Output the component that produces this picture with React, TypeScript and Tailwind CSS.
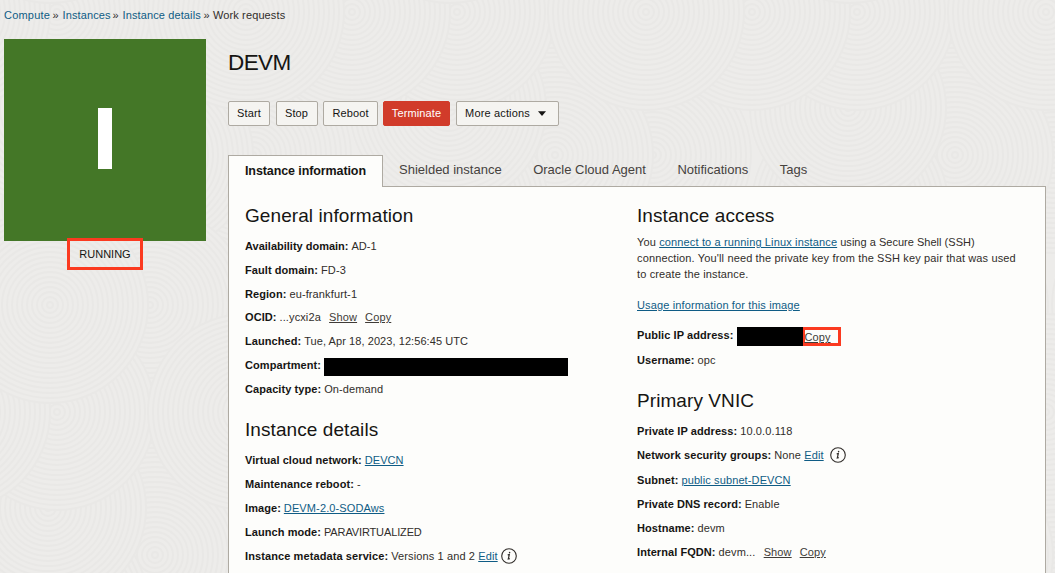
import type { ReactNode } from "react";

const TILE = 400;
const RINGS = [3, 8, 13, 18, 23, 28, 33, 38, 43, 48, 53, 58, 63, 68, 73, 78, 83, 88, 93, 98];
const SWIRLS: [number, number][] = [
  [350, 305], [150, 355], [253, 155], [155, 155], [50, 205], [150, 305], [48, 108], [57, 12], [352, 12], [246, 12], [50, 305],
];

function Swirls() {
  return (
    <svg className="absolute inset-0 h-full w-full" aria-hidden="true">
      <defs>
        <g id="swirl">
          <circle r="98" fill="#edecea" />
          {RINGS.map((r) => (
            <circle key={r} r={r} fill="none" stroke="#e9e8e6" strokeWidth="1.8" />
          ))}
        </g>
        <pattern id="sand" width={TILE} height={TILE} patternUnits="userSpaceOnUse">
          {SWIRLS.map(([x, y]) =>
            [-TILE, 0, TILE].map((dx) =>
              [-TILE, 0, TILE].map((dy) => (
                <use key={`${x}-${y}-${dx}-${dy}`} href="#swirl" x={x + dx} y={y + dy} />
              )),
            ),
          )}
        </pattern>
      </defs>
      <rect width="100%" height="100%" fill="url(#sand)" />
    </svg>
  );
}

function Link({ children, className = "" }: { children: ReactNode; className?: string }) {
  return (
    <a className={`text-[#0f5c85] underline decoration-1 underline-offset-1 ${className}`}>{children}</a>
  );
}

function Action({ children, className = "" }: { children: ReactNode; className?: string }) {
  return <a className={`text-[#403c38] underline decoration-1 underline-offset-1 ${className}`}>{children}</a>;
}

function Row({
  label,
  children,
  className = "h-6",
  labelClass = "tracking-[0.07px]",
}: {
  label: string;
  children?: ReactNode;
  className?: string;
  labelClass?: string;
}) {
  return (
    <div className={`flex items-center whitespace-pre ${className}`}>
      <b className={`text-[#161513] ${labelClass}`}>{label}</b>
      <span className="tracking-[-0.1px]"> </span>
      {children}
    </div>
  );
}

function Info({ className = "" }: { className?: string }) {
  return (
    <svg className={`size-4 ${className}`} viewBox="0 0 16 16" fill="none" stroke="#312d2a">
      <circle cx="8" cy="8" r="7.3" strokeWidth="1.1" />
      <path d="M6.7 6.9l1.6-.3L7.3 11l1.5-.4" strokeWidth="1.2" />
      <circle cx="8.6" cy="4.6" r=".8" fill="#312d2a" stroke="none" />
    </svg>
  );
}

function Heading({ children, className = "" }: { children: ReactNode; className?: string }) {
  return <h2 className={`text-[19px] leading-6 tracking-[0.08px] text-[#161513] ${className}`}>{children}</h2>;
}

const NEUTRAL = "border-[#aeaaa2] bg-[#f5f4f1] text-[#161513]";
const DANGER = "border-[#d13b2a] bg-[#d13b2a] text-white";

function Button({ children, className = "", tone = NEUTRAL }: { children: ReactNode; className?: string; tone?: string }) {
  return (
    <button className={`flex h-[25px] items-center justify-center rounded-[2px] border pb-px ${tone} ${className}`}>
      {children}
    </button>
  );
}

export default function App() {
  return (
    <div className="relative h-[573px] w-[1055px] overflow-hidden bg-[#edecea] font-['Liberation_Sans',Arial,sans-serif] text-[11px] leading-4 tracking-[0.12px] text-[#312d2a]">
      <Swirls />
      <div className="relative flex h-full flex-col">
        <nav className="flex h-[39px] items-start whitespace-pre pl-1 pt-[7px]">
          <a className="w-[48.5px] tracking-[0.2px] text-[#0f5c85]">Compute</a>
          <span className="w-[10px]">»</span>
          <a className="w-[50px] text-[#0f5c85]">Instances</a>
          <span className="w-[10px]">»</span>
          <a className="w-[81px] text-[#0f5c85]">Instance details</a>
          <span className="w-[9.5px]">»</span>
          <span>Work requests</span>
        </nav>
        <div className="flex flex-1 pl-1">
          <aside className="flex w-[202px] shrink-0 flex-col items-center">
            <div className="flex h-[202px] w-full items-center justify-center bg-[#447727]">
              <div className="mb-[3px] h-[61px] w-[14px] bg-white" />
            </div>
            <div className="relative -mt-[3px] flex h-[32px] w-[76px] items-center justify-center border-[3px] border-[#fb3a20] tracking-normal text-[#161513]">
              RUNNING
            </div>
          </aside>
          <main className="ml-[22px] flex w-[818px] flex-col">
            <h1 className="mt-[10px] text-[22.5px] leading-7 tracking-[-0.6px] text-[#161513]">DEVM</h1>
            <div className="mt-6 flex">
              <Button className="w-[42px]">Start</Button>
              <Button className="ml-[6px] w-[42px] pr-px">Stop</Button>
              <Button className="ml-[5px] w-[55px]">Reboot</Button>
              <Button className="ml-[5px] w-[67px]" tone={DANGER}>Terminate</Button>
              <Button className="ml-[6px] w-[103px] pr-[4px]">
                <span className="tracking-[0.15px]">More actions</span>
                <svg className="ml-2 h-[5px] w-2" viewBox="0 0 8 5">
                  <path d="M0 .3h8L4 5Z" fill="#161513" />
                </svg>
              </Button>
            </div>
            <div className="relative mt-[29px] flex h-8 items-start text-[13px] tracking-normal">
              <div className="h-8 w-[155px] whitespace-nowrap border border-b-0 border-[#aeaaa2] bg-[#fdfdfb] pl-4 pt-[7px] text-[12.5px] font-bold tracking-[-0.1px] text-[#161513]">
                Instance information
              </div>
              <div className="flex h-8 flex-1 gap-[31.5px] border-b border-[#aeaaa2] pl-4 pt-[7px] text-[#46423e]">
                <span>Shielded instance</span>
                <span>Oracle Cloud Agent</span>
                <span>Notifications</span>
                <span>Tags</span>
              </div>
            </div>
            <section className="flex flex-1 border-x border-[#aeaaa2] bg-[#fdfdfb] pl-4">
              <div className="w-[392px]">
                <Heading className="mt-[17px]">General information</Heading>
                <div className="mt-[6px]">
                  <Row label="Availability domain:" className="h-6 tracking-normal" labelClass="tracking-normal">AD-1</Row>
                  <Row label="Fault domain:">FD-3</Row>
                  <Row label="Region:">eu-frankfurt-1</Row>
                  <Row label="OCID:" className="h-[23px] pb-px">
                    ...ycxi2a <Action className="ml-[5px]">Show</Action>
                    <Action className="ml-2">Copy</Action>
                  </Row>
                  <Row label="Launched:" className="h-6 tracking-[0.07px]">Tue, Apr 18, 2023, 12:56:45 UTC</Row>
                  <Row label="Compartment:">
                    <span className="relative top-[2px] h-[18px] w-[244px] bg-black" />
                  </Row>
                  <Row label="Capacity type:">On-demand</Row>
                </div>
                <Heading className="mt-[17px]">Instance details</Heading>
                <div className="mt-[6px]">
                  <Row label="Virtual cloud network:" className="h-6 tracking-[0.04px]"><Link>DEVCN</Link></Row>
                  <Row label="Maintenance reboot:">-</Row>
                  <Row label="Image:"><Link>DEVM-2.0-SODAws</Link></Row>
                  <Row label="Launch mode:"><span className="tracking-[-0.13px]">PARAVIRTUALIZED</span></Row>
                  <Row label="Instance metadata service:" labelClass="tracking-[0.1px]">
                    Versions 1 and 2 <Link>Edit</Link>
                    <Info className="ml-[3px]" />
                  </Row>
                </div>
              </div>
              <div>
                <Heading className="mt-[17px]">Instance access</Heading>
                <div className="mt-[6px] whitespace-pre tracking-[0.14px]">
                  <div>You <Link>connect to a running Linux instance</Link><span className="tracking-[0.02px]"> using a Secure Shell (SSH)</span></div>
                  <div>connection. You'll need the private key from the SSH key pair that was used</div>
                  <div>to create the instance.</div>
                </div>
                <div className="mt-[15px] tracking-[0.14px]"><Link>Usage information for this image</Link></div>
                <div className="mt-[10px]">
                  <Row label="Public IP address:" className="h-[25px] pb-px">
                    <span className="relative top-px ml-px h-[19px] w-[66px] bg-black" />
                    <span className="relative top-px flex h-[19px] w-[38px] items-center border-[3px] border-l-2 border-[#fb3a20]">
                      <Action className="relative top-px -ml-px">Copy</Action>
                    </span>
                  </Row>
                  <Row label="Username:">opc</Row>
                </div>
                <Heading className="mt-[17px] -tracking-[0.02px]">Primary VNIC</Heading>
                <div className="mt-[6px]">
                  <Row label="Private IP address:">10.0.0.118</Row>
                  <Row label="Network security groups:">
                    None <Link>Edit</Link>
                    <Info className="ml-[6px]" />
                  </Row>
                  <Row label="Subnet:" className="h-[25px]"><Link>public subnet-DEVCN</Link></Row>
                  <Row label="Private DNS record:" labelClass="tracking-[0.04px]">Enable</Row>
                  <Row label="Hostname:">devm</Row>
                  <Row label="Internal FQDN:">
                    devm... <Action className="ml-[5px]">Show</Action>
                    <Action className="ml-2">Copy</Action>
                  </Row>
                </div>
              </div>
            </section>
          </main>
        </div>
      </div>
    </div>
  );
}
